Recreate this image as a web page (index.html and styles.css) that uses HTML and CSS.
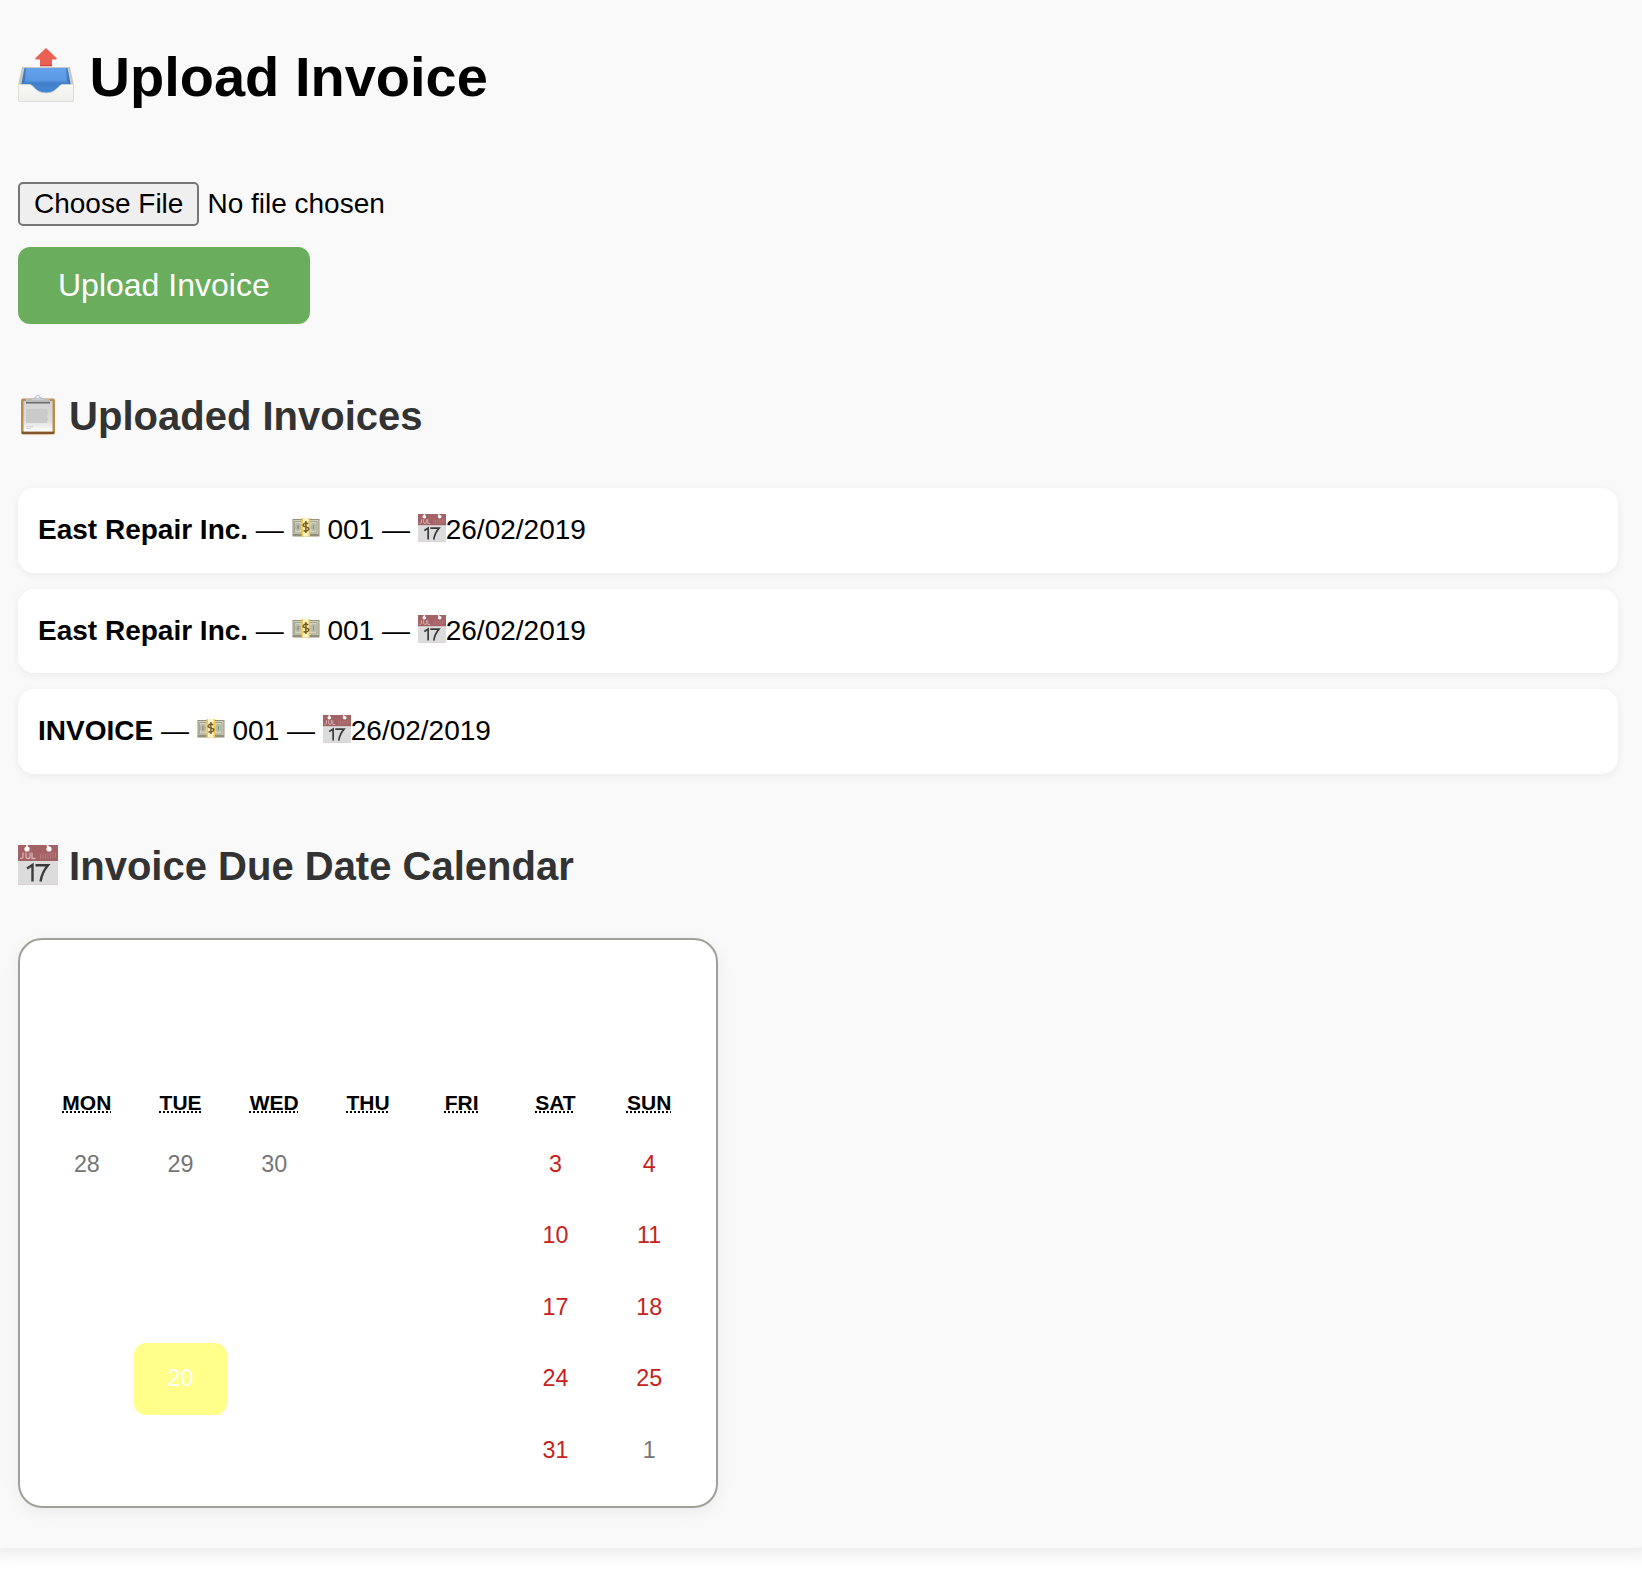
FILE: index.html
```html
<!DOCTYPE html>
<html lang="en">
<head>
<meta charset="utf-8">
<title>Upload Invoice</title>
<link rel="stylesheet" href="styles.css">
</head>
<body>
<svg width="0" height="0" class="defs" aria-hidden="true">
  <defs>
    <linearGradient id="tray" x1="0" y1="0" x2="0" y2="1"><stop offset="0" stop-color="#66a3ee"/><stop offset=".5" stop-color="#5a97e2"/><stop offset=".6" stop-color="#437fc9"/><stop offset="1" stop-color="#4488d8"/></linearGradient>
    <linearGradient id="front" x1="0" y1="0" x2="0" y2="1"><stop offset="0" stop-color="#f8f8f5"/><stop offset="1" stop-color="#eeeeeb"/></linearGradient>
    <linearGradient id="paper" x1="0" y1="0" x2="0" y2="1"><stop offset="0" stop-color="#d2d2d2"/><stop offset=".65" stop-color="#dedede"/><stop offset="1" stop-color="#ffffff"/></linearGradient>
    <symbol id="calendar" viewBox="0 0 40 40">
      <path fill="#dcdcdc" d="M0 15h40v25H0z"/>
      <path fill="#a56264" d="M0 0h40v16H0z"/>
      <path fill="#d8d0d0" d="M0 39h40v1H0z"/>
      <path stroke="#fff" stroke-width="1.6" d="M9 0v3M29 0l2 3"/>
      <circle cx="9" cy="4" r="2.6" fill="#fff"/><circle cx="31" cy="4" r="2.6" fill="#fff"/>
      <path fill="none" stroke="#d5b3b3" stroke-width="1.3" d="M5 7.500v4.500q0 1.600-3 1.300M8 7.500v4q0 2 2 2t2-2v-4M14 7.500v6h3.500"/>
      <path stroke="#b98081" stroke-width=".8" d="M22.500 9v5M25 8v6M27.500 9v5M30 8v6M32.500 8v6M35 7v6M37.500 7v6"/>
      <path fill="none" stroke="#3b3b3b" stroke-width="2.400" d="M9 23.500l5.500-3.500v16.500M17.500 20.200H30q-6 7-7.500 16.300"/>
    </symbol>
    <symbol id="money" viewBox="0 0 28 28">
      <path fill="#8f8f7b" d="M.5 5h27v17.500H.5z"/>
      <path fill="#d2d2bd" d="M1.500 6h25v14h-25z"/>
      <path fill="none" stroke="#a4a591" d="M2.500 7.500h22.500v11.500H2.500z"/>
      <ellipse cx="6" cy="13" rx="3" ry="4" fill="#b7b8a5"/><ellipse cx="21.500" cy="13" rx="3" ry="4" fill="#b7b8a5"/>
      <path stroke="#7d806f" d="M6 11v4"/><path stroke="#65aa87" d="M21.500 11v4"/>
      <path fill="#f2c84b" d="M9.500 4h8.500v18.500H9.500z"/>
      <path fill="#fff3c5" d="M11 4h5.500v18.500H11z"/>
      <path fill="none" stroke="#765b25" stroke-width="1.500" d="M16.200 10q-2.200-2-4.400 0t2.200 3 2.200 3-4.700.5M13.900 7v12"/>
    </symbol>
  </defs>
</svg>
<main class="container">
  <h1 class="title"><svg class="icon icon-xl" viewBox="0 0 56 56">
    <path fill="#c9c9c3" d="M4 21h48l4 18H0z"/>
    <path fill="url(#tray)" d="M6.500 22h43l3 16v9h-49v-9z"/>
    <path fill="#245b9c" opacity=".5" d="M6.500 22l1.500 0-1 13-3.500 3zM49.500 22H48l1 13 3.500 3z"/>
    <path fill="url(#front)" stroke="#d8d8d3" stroke-width=".8" d="M.5 38.500H11c5 0 6 8.500 17 8.500s12-8.500 17-8.500h10.500v15.500q0 1.500-1.500 1.500H2q-1.500 0-1.500-1.500z"/>
    <path fill="#ea6052" d="M28 2l11 10.500-1 1H34V20H22v-6.500h-4l-1-1z"/>
    <path fill="#cf4035" d="M22 19h12v1.300H22z"/>
  </svg> Upload Invoice</h1>
  <form class="upload">
    <div class="file"><span class="file-button">Choose File</span><span>No file chosen</span></div>
    <button type="button" class="submit">Upload Invoice</button>
  </form>

  <h2 class="heading"><svg class="icon icon-lg" viewBox="0 0 40 40">
    <rect x="3" y="3.500" width="34" height="36" rx="2" fill="#b98d4d"/>
    <path fill="#80552c" d="M4 36.500h32v2.500H4z"/>
    <path fill="url(#paper)" d="M5.500 6h29v30.500h-29z"/>
    <path fill="#cacaca" d="M8 14h21l1 4-1 3 1 3-1 4H8z"/>
    <path stroke="#cbcbcb" stroke-width=".8" d="M8 11.500h5M8 31.500h7M8 33.500h5"/>
    <path fill="#b8babc" d="M8 4h24v3.500H8z"/><path fill="#6e6c6b" d="M8 7h24v1.500H8z"/>
    <path fill="#c9ced3" d="M14 4q3 0 4-2.500a2 2 0 0 1 4 0Q23 4 26 4v1H14z"/>
    <path fill="none" stroke="#8ab0d4" d="M15.500 3.500l2-1M24.500 3.500l-2-1"/><circle cx="20" cy="2" r="1" fill="#fff"/>
  </svg> Uploaded Invoices</h2>
  <ul class="invoices">
    <li class="invoice"><strong>East Repair Inc.</strong> — <svg class="icon icon-sm"><use href="#money"/></svg> 001 — <svg class="icon icon-sm"><use href="#calendar"/></svg>26/02/2019</li>
    <li class="invoice"><strong>East Repair Inc.</strong> — <svg class="icon icon-sm"><use href="#money"/></svg> 001 — <svg class="icon icon-sm"><use href="#calendar"/></svg>26/02/2019</li>
    <li class="invoice"><strong>INVOICE</strong> — <svg class="icon icon-sm"><use href="#money"/></svg> 001 — <svg class="icon icon-sm"><use href="#calendar"/></svg>26/02/2019</li>
  </ul>

  <h2 class="heading"><svg class="icon icon-lg"><use href="#calendar"/></svg> Invoice Due Date Calendar</h2>
  <section class="calendar">
    <div class="weekdays">
      <abbr title="Monday">MON</abbr><abbr title="Tuesday">TUE</abbr><abbr title="Wednesday">WED</abbr><abbr title="Thursday">THU</abbr><abbr title="Friday">FRI</abbr><abbr title="Saturday">SAT</abbr><abbr title="Sunday">SUN</abbr>
    </div>
    <div class="days">
      <span class="day muted">28</span><span class="day muted">29</span><span class="day muted">30</span><span class="day"></span><span class="day"></span><span class="day weekend">3</span><span class="day weekend">4</span>
      <span class="day"></span><span class="day"></span><span class="day"></span><span class="day"></span><span class="day"></span><span class="day weekend">10</span><span class="day weekend">11</span>
      <span class="day"></span><span class="day"></span><span class="day"></span><span class="day"></span><span class="day"></span><span class="day weekend">17</span><span class="day weekend">18</span>
      <span class="day"></span><span class="day today">20</span><span class="day"></span><span class="day"></span><span class="day"></span><span class="day weekend">24</span><span class="day weekend">25</span>
      <span class="day"></span><span class="day"></span><span class="day"></span><span class="day"></span><span class="day"></span><span class="day weekend">31</span><span class="day muted">1</span>
    </div>
  </section>
</main>
</body>
</html>
```
FILE: styles.css
```css
* { box-sizing: border-box; }

html { background: #fff; }

body {
  min-height: 1592px;
  margin: 0;
  color: #000;
  font-family: "Liberation Sans", Arial, sans-serif;
  font-size: 28px;
  overflow: hidden;
}

.defs { display: block; }

/* The panel is slightly wider than the window on both sides. */
.container {
  height: 1548px;
  margin: 0 -18px 0 -22px;
  padding: 45px 42px 40px 40px;
  background: #f9f9f9;
  border-radius: 0 0 24px 24px;
  box-shadow: 0 4px 20px rgba(0, 0, 0, .1);
}

.icon { display: inline-block; overflow: visible; }
.icon-xl { width: 56px; height: 56px; vertical-align: -6px; }
.icon-lg { width: 40px; height: 40px; vertical-align: -5px; }
.icon-sm { width: 28px; height: 28px; vertical-align: -3px; }

.title {
  height: 64px;
  margin: 0 0 73px;
  font-size: 56px;
  line-height: 64px;
}

.upload {
  display: flex;
  flex-direction: column;
  align-items: flex-start;
  gap: 21px;
}

.file { display: flex; align-items: center; gap: 8px; height: 44px; }

.file-button {
  height: 44px;
  padding: 0 14px;
  border: 2px solid #767676;
  border-radius: 5px;
  background: #efefef;
  line-height: 39px;
}

.submit {
  height: 77px;
  padding: 0 40px;
  border: 0;
  border-radius: 12px;
  background: #69ad5d;
  color: #fff;
  font: 32px "Liberation Sans", Arial, sans-serif;
}

.heading {
  height: 46px;
  margin: 69px 0 49px;
  color: #333;
  font-size: 40px;
  line-height: 46px;
}

.invoices {
  display: flex;
  flex-direction: column;
  gap: 16px;
  margin: 0;
  padding: 0;
  list-style: none;
}

.invoice {
  width: 1600px;
  height: 84.7px;
  padding: 20px 20px 18px;
  border-radius: 16px;
  background: #fff;
  box-shadow: 0 2px 8px rgba(0, 0, 0, .06);
  line-height: 44.8px;
}

.calendar {
  width: 700px;
  height: 570px;
  padding: 136.500px 20px 20px;
  border: 2px solid #a0a096;
  border-radius: 24px;
  background: #fff;
  box-shadow: 0 4px 16px rgba(0, 0, 0, .06);
}

.weekdays, .days {
  display: grid;
  grid-template-columns: repeat(7, 1fr);
}

.weekdays {
  height: 52px;
  align-items: center;
  justify-items: center;
  font-size: 21px;
  font-weight: bold;
}

.weekdays abbr { text-decoration: underline dotted; }

.days { grid-auto-rows: 71.500px; font-size: 23.300px; }

.day {
  display: flex;
  align-items: center;
  justify-content: center;
  border-radius: 12px;
}

.muted { color: #757575; }
.weekend { color: #c5221b; }
.today { background: #ffff8a; color: #fff; }
```
